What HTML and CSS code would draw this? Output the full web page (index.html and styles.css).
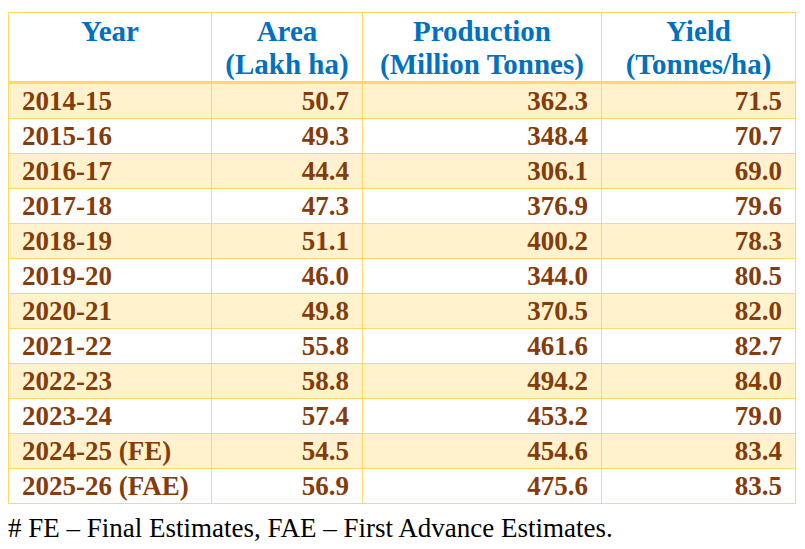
FILE: index.html
```html
<!DOCTYPE html>
<html>
<head>
<meta charset="utf-8">
<link rel="stylesheet" href="styles.css">
</head>
<body>
<div class="wrap">
<table class="data">
<colgroup><col class="c1"><col class="c2"><col class="c3"><col class="c4"></colgroup>
<thead>
<tr><th>Year</th><th>Area<br>(Lakh ha)</th><th>Production<br>(Million Tonnes)</th><th>Yield<br>(Tonnes/ha)</th></tr>
</thead>
<tbody>
<tr class="alt"><td>2014-15</td><td>50.7</td><td>362.3</td><td>71.5</td></tr>
<tr><td>2015-16</td><td>49.3</td><td>348.4</td><td>70.7</td></tr>
<tr class="alt"><td>2016-17</td><td>44.4</td><td>306.1</td><td>69.0</td></tr>
<tr><td>2017-18</td><td>47.3</td><td>376.9</td><td>79.6</td></tr>
<tr class="alt"><td>2018-19</td><td>51.1</td><td>400.2</td><td>78.3</td></tr>
<tr><td>2019-20</td><td>46.0</td><td>344.0</td><td>80.5</td></tr>
<tr class="alt"><td>2020-21</td><td>49.8</td><td>370.5</td><td>82.0</td></tr>
<tr><td>2021-22</td><td>55.8</td><td>461.6</td><td>82.7</td></tr>
<tr class="alt"><td>2022-23</td><td>58.8</td><td>494.2</td><td>84.0</td></tr>
<tr><td>2023-24</td><td>57.4</td><td>453.2</td><td>79.0</td></tr>
<tr class="alt"><td>2024-25 (FE)</td><td>54.5</td><td>454.6</td><td>83.4</td></tr>
<tr><td>2025-26 (FAE)</td><td>56.9</td><td>475.6</td><td>83.5</td></tr>
</tbody>
</table>
<p class="note"># FE – Final Estimates, FAE – First Advance Estimates.</p>
</div>
</body>
</html>
```
FILE: styles.css
```css
body { margin: 0; font-family: "Liberation Serif", serif; }
.wrap { padding: 12px 0 0 8px; }
.data {
  border-collapse: collapse;
  width: 787px;
  table-layout: fixed;
  border: 1px solid #FFD966;
}
.c1 { width: 203px; }
.c2 { width: 151px; }
.c3 { width: 239px; }
.c4 { width: 194px; }
.data th {
  font-family: "Liberation Serif", serif;
  color: #0070C0;
  font-size: 29px;
  font-weight: bold;
  line-height: 33px;
  height: 66px;
  padding: 2px 4px 0;
  vertical-align: top;
  text-align: center;
  border-left: 1px solid #FFD966;
  border-right: 1px solid #FFD966;
  border-bottom: 3px solid #FFD966;
  white-space: nowrap;
}
.data td {
  font-family: "Liberation Serif", serif;
  color: #843C0C;
  font-size: 27px;
  font-weight: bold;
  height: 34px;
  line-height: 34px;
  padding: 0 13px;
  border: 1px solid #FFD966;
  text-align: right;
  white-space: nowrap;
}
.data td:first-child { text-align: left; }
.data tr.alt td { background: #FFF2CC; }
.note {
  font-family: "Liberation Serif", serif;
  margin: 4px 0 0 0;
  font-size: 27px;
  color: #000;
  line-height: 40px;
}
```
